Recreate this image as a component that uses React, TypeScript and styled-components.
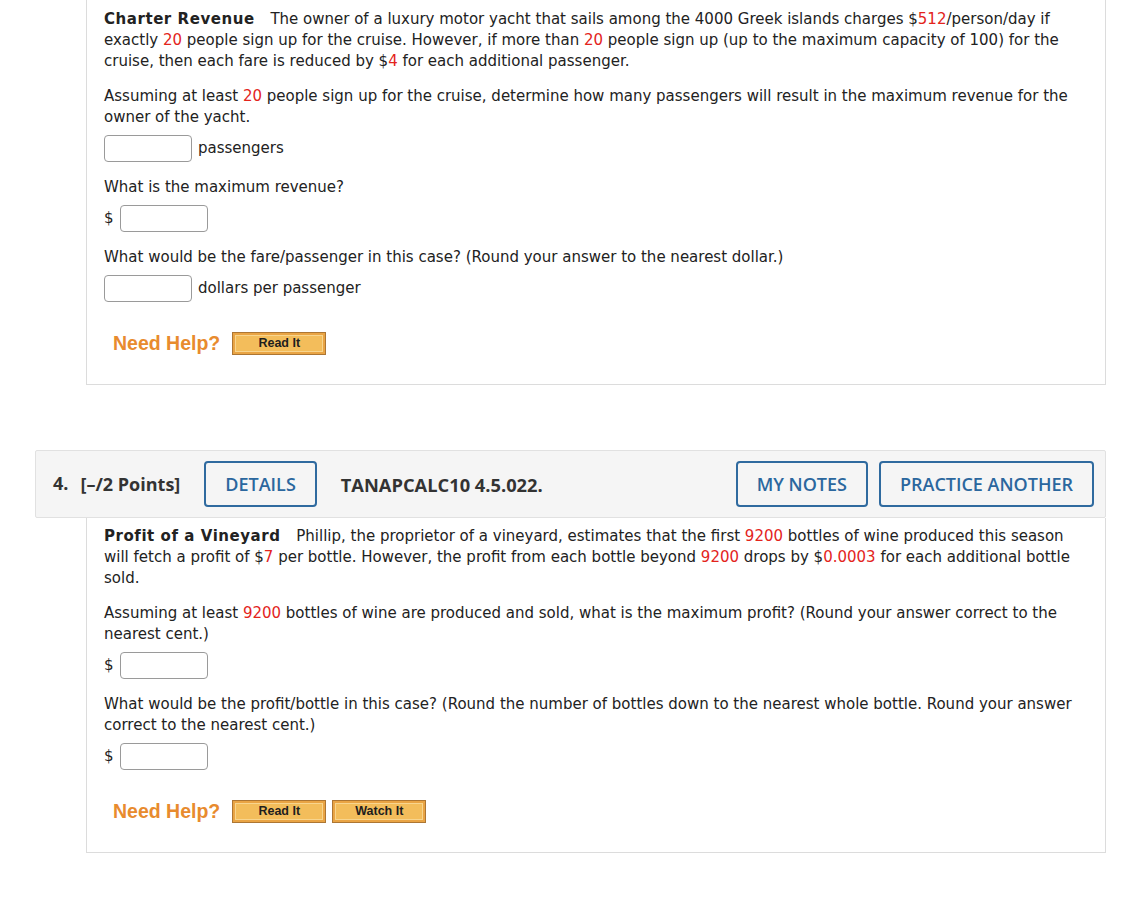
import React from "react";
import styled, { createGlobalStyle } from "styled-components";

const Global = createGlobalStyle`
  html, body { margin: 0; padding: 0; background: #fff; }
  body { font-family: "DejaVu Sans", Verdana, sans-serif; }
`;

const Page = styled.div`
  width: 1071px;
  padding-left: 35px;
  padding-bottom: 44px;
`;

const Card = styled.div<{ $pt: number }>`
  margin-left: 51px;
  width: 1020px;
  box-sizing: border-box;
  border: 1px solid #dcdcdc;
  border-top: none;
  padding: ${(p) => p.$pt}px 17px 29px 17px;
  color: #222;
  font-size: 15px;
  line-height: 21px;
`;

const Para = styled.p`
  margin: 0 0 14px 0;
`;

const Title = styled.b`
  font-weight: bold;
  letter-spacing: 0.55px;
  margin-right: 11px;
`;

const Red = styled.span`
  color: #e3241c;
`;

const AnswerRow = styled.div`
  display: flex;
  align-items: center;
  gap: 6px;
  margin: -7px 0 15px 0;
`;

const Input = styled.span`
  display: inline-block;
  width: 88px;
  height: 27px;
  box-sizing: border-box;
  border: 1px solid #9a9a9a;
  border-radius: 4px;
  background: #fff;
`;

const HelpRow = styled.div`
  display: flex;
  align-items: center;
  padding-left: 9px;
  margin-top: 30px;
  gap: 6px;
`;

const NeedHelp = styled.span`
  font-family: "Liberation Sans", Arial, sans-serif;
  font-weight: bold;
  font-size: 19.5px;
  color: #e88b2e;
  margin-right: 6px;
`;

const HelpButton = styled.span`
  display: inline-flex;
  align-items: center;
  justify-content: center;
  width: 94px;
  height: 23px;
  box-sizing: border-box;
  border: 1px solid #ad7633;
  background: #f3bd5b;
  box-shadow: inset 0 0 0 2px #e9a444, inset 0 0 0 3px #f8d58e;
  font-family: "Liberation Sans", Arial, sans-serif;
  font-weight: bold;
  font-size: 12.5px;
  color: #1e1e1e;
`;

const Gap = styled.div`
  height: 65px;
`;

const Header = styled.div`
  display: flex;
  align-items: center;
  height: 68px;
  box-sizing: border-box;
  background: #f5f5f5;
  border: 1px solid #e1e1e1;
  border-radius: 2px;
  padding: 0 11px 0 17px;
  font-family: "Open Sans", sans-serif;
  color: #333;
`;

const Num = styled.span`
  font-weight: bold;
  font-size: 18px;
  margin-right: 12px;
  position: relative;
  top: -1px;
`;

const Points = styled.span`
  font-weight: bold;
  font-size: 18px;
  margin-right: 24px;
`;

const Code = styled.span`
  font-weight: bold;
  font-size: 18.3px;
  margin-left: 24px;
  flex: 1;
`;

const OutlineButton = styled.span<{ $ml?: number }>`
  display: inline-flex;
  align-items: center;
  height: 46px;
  box-sizing: border-box;
  padding: 0 19px;
  border: 2px solid #2f6a9f;
  border-radius: 4px;
  color: #2b679e;
  font-family: "Open Sans", sans-serif;
  font-size: 18px;
  font-weight: 600;
  margin-left: ${(p) => p.$ml ?? 0}px;
`;

export default function App() {
  return (
    <>
      <Global />
      <Page>
        <Card $pt={9}>
          <Para>
            <Title>Charter Revenue</Title> The owner of a luxury motor yacht that sails among the 4000 Greek islands charges $<Red>512</Red>/person/day if exactly <Red>20</Red> people sign up for the cruise. However, if more than <Red>20</Red> people sign up (up to the maximum capacity of 100) for the cruise, then each fare is reduced by $<Red>4</Red> for each additional passenger.
          </Para>
          <Para>
            Assuming at least <Red>20</Red> people sign up for the cruise, determine how many passengers will result in the maximum revenue for the owner of the yacht.
          </Para>
          <AnswerRow>
            <Input />
            <span>passengers</span>
          </AnswerRow>
          <Para>What is the maximum revenue?</Para>
          <AnswerRow>
            <span>$</span>
            <Input />
          </AnswerRow>
          <Para>
            What would be the fare/passenger in this case? (Round your answer to the nearest dollar.)
          </Para>
          <AnswerRow>
            <Input />
            <span>dollars per passenger</span>
          </AnswerRow>
          <HelpRow>
            <NeedHelp>Need Help?</NeedHelp>
            <HelpButton>Read It</HelpButton>
          </HelpRow>
        </Card>
        <Gap />
        <Header>
          <Num>4.</Num>
          <Points>[–/2 Points]</Points>
          <OutlineButton>DETAILS</OutlineButton>
          <Code>TANAPCALC10 4.5.022.</Code>
          <OutlineButton>MY NOTES</OutlineButton>
          <OutlineButton $ml={11}>PRACTICE ANOTHER</OutlineButton>
        </Header>
        <Card $pt={8}>
          <Para>
            <Title>Profit of a Vineyard</Title> Phillip, the proprietor of a vineyard, estimates that the first <Red>9200</Red> bottles of wine produced this season will fetch a profit of $<Red>7</Red> per bottle. However, the profit from each bottle beyond <Red>9200</Red> drops by $<Red>0.0003</Red> for each additional bottle sold.
          </Para>
          <Para>
            Assuming at least <Red>9200</Red> bottles of wine are produced and sold, what is the maximum profit? (Round your answer correct to the nearest cent.)
          </Para>
          <AnswerRow>
            <span>$</span>
            <Input />
          </AnswerRow>
          <Para>
            What would be the profit/bottle in this case? (Round the number of bottles down to the nearest whole bottle. Round your answer correct to the nearest cent.)
          </Para>
          <AnswerRow>
            <span>$</span>
            <Input />
          </AnswerRow>
          <HelpRow>
            <NeedHelp>Need Help?</NeedHelp>
            <HelpButton>Read It</HelpButton>
            <HelpButton>Watch It</HelpButton>
          </HelpRow>
        </Card>
      </Page>
    </>
  );
}
